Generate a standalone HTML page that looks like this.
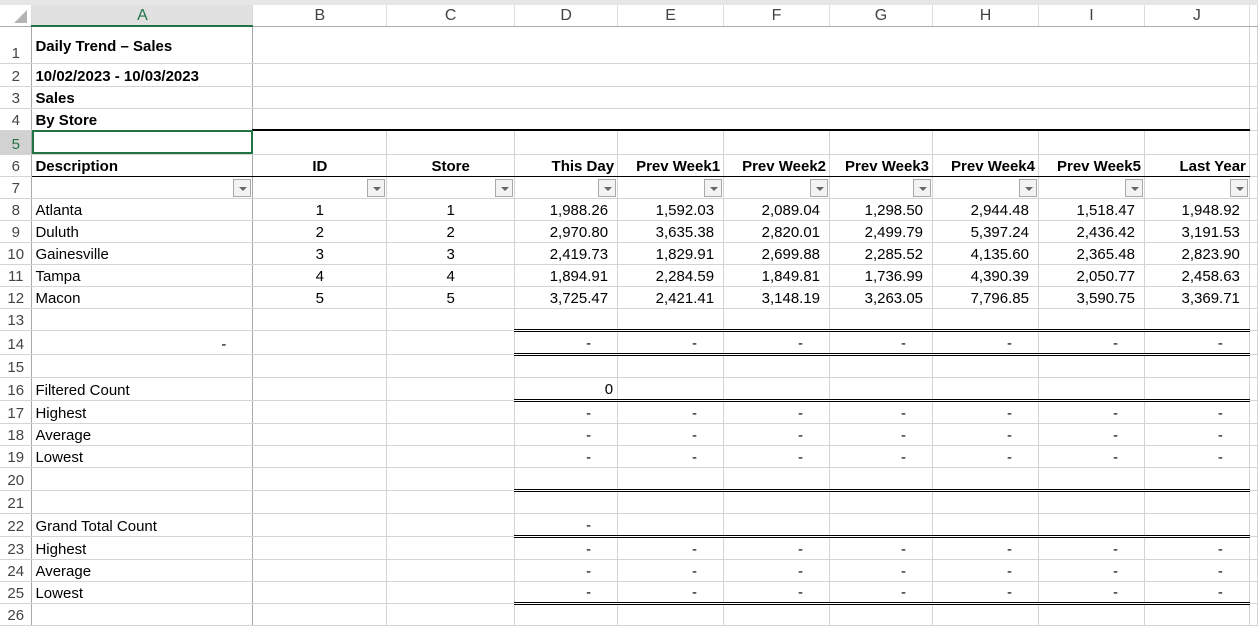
<!DOCTYPE html>
<html><head><meta charset="utf-8"><style>
html,body{margin:0;padding:0;background:#fff;width:1258px;height:617px;overflow:hidden}
body{font-family:"Liberation Sans",Arial,sans-serif;font-size:15px;color:#000}
.top{height:5px;background:#e6e6e6}
table{border-collapse:collapse;table-layout:fixed;position:absolute;top:5px;left:0}
td{border-right:1px solid #d4d4d4;border-bottom:1px solid #d4d4d4;padding:0 3px;white-space:nowrap;overflow:hidden;vertical-align:bottom;line-height:19px}
td.rh{text-align:center;color:#444;border-right:1px solid #a8a8a8;padding:0}
tr.hdr td{border-right:1px solid #dcdcdc;border-bottom:1px solid #ababab;text-align:center;color:#444;vertical-align:middle;font-size:16px}
td.a{border-right:1px solid #a8a8a8}
.b{font-weight:bold}
.r{text-align:right}
.c{text-align:center}
.n{text-align:right;padding-right:9px}
.d{text-align:right;padding-right:26px}
.dbl{border-bottom:3px double #000}
.thick{border-bottom:2px solid #000}
.thin{border-bottom:1px solid #000}
.f{position:relative}
.f i{position:absolute;right:1px;top:2px;width:18px;height:18px;border:1px solid #a9a9a9;background:#f3f3f3;box-sizing:border-box}
.f i:after{content:"";position:absolute;left:5px;top:7px;border-left:4px solid transparent;border-right:4px solid transparent;border-top:4px solid #666}
</style></head><body>
<div class="top"></div>
<table>
<colgroup><col style="width:32px"><col style="width:221px"><col style="width:134px"><col style="width:128px"><col style="width:103px"><col style="width:106px"><col style="width:106px"><col style="width:103px"><col style="width:106px"><col style="width:106px"><col style="width:105px"><col style="width:8px"></colgroup>
<tr class="hdr" style="height:21px"><td style="background:#fff;position:relative;border-right:1px solid #dcdcdc"><span style="position:absolute;right:4px;bottom:3px;width:0;height:0;border-left:13px solid transparent;border-bottom:13px solid #b4b4b4"></span></td><td style="background:#e1e1e1;color:#217346;border-bottom:2px solid #217346">A</td><td>B</td><td>C</td><td>D</td><td>E</td><td>F</td><td>G</td><td>H</td><td>I</td><td>J</td><td></td></tr>
<tr style="height:37px"><td class="rh">1</td><td class="a b" style="vertical-align:middle;padding-top:3px">Daily Trend – Sales</td><td style="border-right:none"></td><td style="border-right:none"></td><td style="border-right:none"></td><td style="border-right:none"></td><td style="border-right:none"></td><td style="border-right:none"></td><td style="border-right:none"></td><td style="border-right:none"></td><td></td><td></td></tr>
<tr style="height:23px"><td class="rh">2</td><td class="a b">10/02/2023 - 10/03/2023</td><td style="border-right:none"></td><td style="border-right:none"></td><td style="border-right:none"></td><td style="border-right:none"></td><td style="border-right:none"></td><td style="border-right:none"></td><td style="border-right:none"></td><td style="border-right:none"></td><td></td><td></td></tr>
<tr style="height:22px"><td class="rh">3</td><td class="a b">Sales</td><td style="border-right:none"></td><td style="border-right:none"></td><td style="border-right:none"></td><td style="border-right:none"></td><td style="border-right:none"></td><td style="border-right:none"></td><td style="border-right:none"></td><td style="border-right:none"></td><td></td><td></td></tr>
<tr style="height:22px"><td class="rh">4</td><td class="a b">By Store</td><td class="thick" style="border-right:none"></td><td class="thick" style="border-right:none"></td><td class="thick" style="border-right:none"></td><td class="thick" style="border-right:none"></td><td class="thick" style="border-right:none"></td><td class="thick" style="border-right:none"></td><td class="thick" style="border-right:none"></td><td class="thick" style="border-right:none"></td><td class="thick"></td><td></td></tr>
<tr style="height:24px"><td class="rh" style="background:#d2d2d2;color:#217346">5</td><td class="a" style="outline:2px solid #217346;outline-offset:-2px"></td><td></td><td></td><td></td><td></td><td></td><td></td><td></td><td></td><td></td><td></td></tr>
<tr style="height:22px"><td class="rh">6</td><td class="a b thin">Description</td><td class="b c thin">ID</td><td class="b c thin">Store</td><td class="b r thin">This Day</td><td class="b r thin">Prev Week1</td><td class="b r thin">Prev Week2</td><td class="b r thin">Prev Week3</td><td class="b r thin">Prev Week4</td><td class="b r thin">Prev Week5</td><td class="b r thin">Last Year</td><td></td></tr>
<tr style="height:22px"><td class="rh">7</td><td class="a f"><i></i></td><td class="f"><i></i></td><td class="f"><i></i></td><td class="f"><i></i></td><td class="f"><i></i></td><td class="f"><i></i></td><td class="f"><i></i></td><td class="f"><i></i></td><td class="f"><i></i></td><td class="f"><i></i></td><td></td></tr>
<tr style="height:22px"><td class="rh">8</td><td class="a">Atlanta</td><td class="c">1</td><td class="c">1</td><td class="n">1,988.26</td><td class="n">1,592.03</td><td class="n">2,089.04</td><td class="n">1,298.50</td><td class="n">2,944.48</td><td class="n">1,518.47</td><td class="n">1,948.92</td><td></td></tr>
<tr style="height:22px"><td class="rh">9</td><td class="a">Duluth</td><td class="c">2</td><td class="c">2</td><td class="n">2,970.80</td><td class="n">3,635.38</td><td class="n">2,820.01</td><td class="n">2,499.79</td><td class="n">5,397.24</td><td class="n">2,436.42</td><td class="n">3,191.53</td><td></td></tr>
<tr style="height:22px"><td class="rh">10</td><td class="a">Gainesville</td><td class="c">3</td><td class="c">3</td><td class="n">2,419.73</td><td class="n">1,829.91</td><td class="n">2,699.88</td><td class="n">2,285.52</td><td class="n">4,135.60</td><td class="n">2,365.48</td><td class="n">2,823.90</td><td></td></tr>
<tr style="height:22px"><td class="rh">11</td><td class="a">Tampa</td><td class="c">4</td><td class="c">4</td><td class="n">1,894.91</td><td class="n">2,284.59</td><td class="n">1,849.81</td><td class="n">1,736.99</td><td class="n">4,390.39</td><td class="n">2,050.77</td><td class="n">2,458.63</td><td></td></tr>
<tr style="height:22px"><td class="rh">12</td><td class="a">Macon</td><td class="c">5</td><td class="c">5</td><td class="n">3,725.47</td><td class="n">2,421.41</td><td class="n">3,148.19</td><td class="n">3,263.05</td><td class="n">7,796.85</td><td class="n">3,590.75</td><td class="n">3,369.71</td><td></td></tr>
<tr style="height:22px"><td class="rh">13</td><td class="a"></td><td></td><td></td><td class="dbl"></td><td class="dbl"></td><td class="dbl"></td><td class="dbl"></td><td class="dbl"></td><td class="dbl"></td><td class="dbl"></td><td></td></tr>
<tr style="height:24px"><td class="rh">14</td><td class="a d">-</td><td></td><td></td><td class="d dbl">-</td><td class="d dbl">-</td><td class="d dbl">-</td><td class="d dbl">-</td><td class="d dbl">-</td><td class="d dbl">-</td><td class="d dbl">-</td><td></td></tr>
<tr style="height:23px"><td class="rh">15</td><td class="a"></td><td></td><td></td><td></td><td></td><td></td><td></td><td></td><td></td><td></td><td></td></tr>
<tr style="height:23px"><td class="rh">16</td><td class="a">Filtered Count</td><td></td><td></td><td class="n dbl" style="padding-right:4px">0</td><td class="dbl"></td><td class="dbl"></td><td class="dbl"></td><td class="dbl"></td><td class="dbl"></td><td class="dbl"></td><td></td></tr>
<tr style="height:23px"><td class="rh">17</td><td class="a">Highest</td><td></td><td></td><td class="d">-</td><td class="d">-</td><td class="d">-</td><td class="d">-</td><td class="d">-</td><td class="d">-</td><td class="d">-</td><td></td></tr>
<tr style="height:22px"><td class="rh">18</td><td class="a">Average</td><td></td><td></td><td class="d">-</td><td class="d">-</td><td class="d">-</td><td class="d">-</td><td class="d">-</td><td class="d">-</td><td class="d">-</td><td></td></tr>
<tr style="height:22px"><td class="rh">19</td><td class="a">Lowest</td><td></td><td></td><td class="d">-</td><td class="d">-</td><td class="d">-</td><td class="d">-</td><td class="d">-</td><td class="d">-</td><td class="d">-</td><td></td></tr>
<tr style="height:23px"><td class="rh">20</td><td class="a"></td><td></td><td></td><td class="dbl"></td><td class="dbl"></td><td class="dbl"></td><td class="dbl"></td><td class="dbl"></td><td class="dbl"></td><td class="dbl"></td><td></td></tr>
<tr style="height:23px"><td class="rh">21</td><td class="a"></td><td></td><td></td><td></td><td></td><td></td><td></td><td></td><td></td><td></td><td></td></tr>
<tr style="height:23px"><td class="rh">22</td><td class="a">Grand Total Count</td><td></td><td></td><td class="d dbl">-</td><td class="dbl"></td><td class="dbl"></td><td class="dbl"></td><td class="dbl"></td><td class="dbl"></td><td class="dbl"></td><td></td></tr>
<tr style="height:23px"><td class="rh">23</td><td class="a">Highest</td><td></td><td></td><td class="d">-</td><td class="d">-</td><td class="d">-</td><td class="d">-</td><td class="d">-</td><td class="d">-</td><td class="d">-</td><td></td></tr>
<tr style="height:22px"><td class="rh">24</td><td class="a">Average</td><td></td><td></td><td class="d">-</td><td class="d">-</td><td class="d">-</td><td class="d">-</td><td class="d">-</td><td class="d">-</td><td class="d">-</td><td></td></tr>
<tr style="height:22px"><td class="rh">25</td><td class="a">Lowest</td><td></td><td></td><td class="d dbl">-</td><td class="d dbl">-</td><td class="d dbl">-</td><td class="d dbl">-</td><td class="d dbl">-</td><td class="d dbl">-</td><td class="d dbl">-</td><td></td></tr>
<tr style="height:22px"><td class="rh">26</td><td class="a"></td><td></td><td></td><td></td><td></td><td></td><td></td><td></td><td></td><td></td><td></td></tr>
</table>
</body></html>
